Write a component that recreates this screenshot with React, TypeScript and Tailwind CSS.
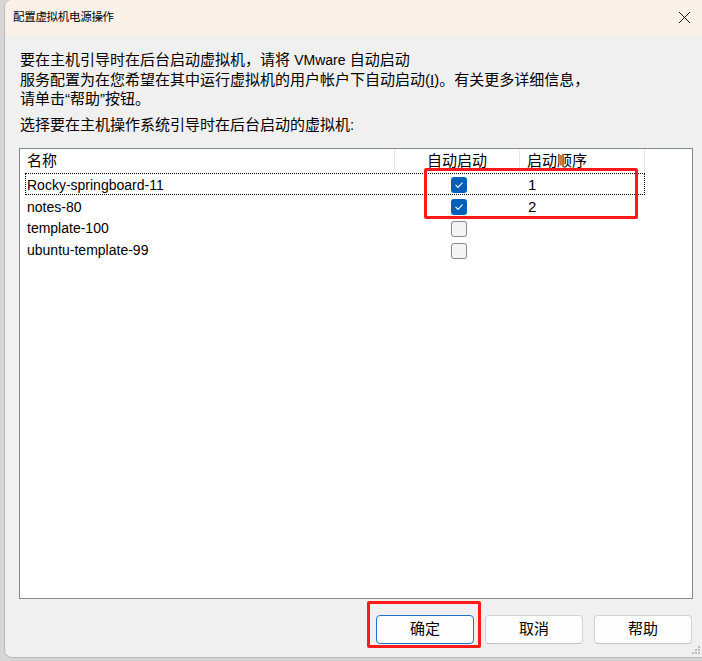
import React from "react"

const FONT = '"Liberation Sans", "Noto Sans CJK SC", sans-serif'

const vms = [
  { name: "Rocky-springboard-11", checked: true, order: "1", focus: true },
  { name: "notes-80", checked: true, order: "2", focus: false },
  { name: "template-100", checked: false, order: "", focus: false },
  { name: "ubuntu-template-99", checked: false, order: "", focus: false },
]

const Checkbox = ({ checked }: { checked: boolean }) =>
  checked ? (
    <div className="w-[16px] h-[16px] rounded-[3px] bg-[#005fb8] flex items-center justify-center">
      <svg width="10" height="10" viewBox="0 0 10 10" fill="none">
        <path d="M1.8 5.2 L4 7.3 L8.3 2.8" stroke="#ffffff" strokeWidth="1.1" strokeLinecap="round" strokeLinejoin="round" />
      </svg>
    </div>
  ) : (
    <div className="w-[16px] h-[16px] rounded-[3px] border border-[#8a8a8a] bg-[#f4f4f4]" />
  )

const Button = ({ label, primary }: { label: string; primary?: boolean }) => (
  <button
    className={
      primary
        ? "w-[98px] h-[29px] rounded-[4px] border border-[#1a73c9] bg-[#fdfdfd] text-[15px] text-black flex items-center justify-center"
        : "w-[98px] h-[29px] rounded-[4px] border border-[#d3d3d3] border-b-[#c2c2c2] bg-[#fdfdfd] text-[15px] text-black flex items-center justify-center"
    }
  >
    {label}
  </button>
)

export default function App() {
  return (
    <div className="w-[702px] h-[661px] overflow-hidden bg-[#d6d6d6] relative" style={{ fontFamily: FONT }}>
      <div className="ml-[4px] w-[698px] h-[658px] bg-[#f0f0f0] border-l border-b border-[#b9b9b9] rounded-tl-[8px] rounded-bl-[8px] overflow-hidden flex flex-col relative">
        {/* Title bar */}
        <div className="h-[35px] shrink-0 bg-[#faf2e9] flex items-center justify-between pl-[8px] pr-[10px]">
          <span className="text-[11.5px] text-black tracking-[-0.3px]">配置虚拟机电源操作</span>
          <svg width="13" height="13" viewBox="0 0 13 13" className="mr-[1px]">
            <path d="M1 1 L12 12 M12 1 L1 12" stroke="#111111" strokeWidth="1" />
          </svg>
        </div>

        {/* Body */}
        <div className="flex-1 flex flex-col pl-[14px] pr-[10px] pt-[15px]">
          <div className="pl-[1px] text-[15px] leading-[19px] text-black">
            <p>
              要在主机引导时在后台启动虚拟机，请将 <span className="text-[14px]">VMware</span> 自动启动
            </p>
            <p>
              服务配置为在您希望在其中运行虚拟机的用户帐户下自动启动(<span className="underline">I</span>)。有关更多详细信息，
            </p>
            <p>请单击“帮助”按钮。</p>
            <p className="mt-[7px]">选择要在主机操作系统引导时在后台启动的虚拟机:</p>
          </div>

          {/* List */}
          <div className="mt-[14px] w-[674px] h-[451px] bg-white border border-[#828790]">
            <div className="grid grid-cols-[375px_125px_125px] h-[24px] text-[15px] text-black">
              <div className="border-r border-[#e5e5e5] pl-[7px] flex items-center">名称</div>
              <div className="border-r border-[#e5e5e5] flex items-center justify-center">自动启动</div>
              <div className="border-r border-[#e5e5e5] pl-[7px] flex items-center">启动顺序</div>
            </div>
            <div className="ml-[5px] w-[620px]">
              {vms.map((vm) => (
                <div
                  key={vm.name}
                  className={
                    vm.focus
                      ? "grid grid-cols-[370px_125px_125px] h-[22px] border border-dotted border-black"
                      : "grid grid-cols-[370px_125px_125px] h-[22px] border border-transparent"
                  }
                >
                  <div className="pl-[1px] flex items-center text-[14px] text-black">{vm.name}</div>
                  <div className="flex items-center justify-center">
                    <Checkbox checked={vm.checked} />
                  </div>
                  <div className="pl-[7px] flex items-center text-[15px] text-black">{vm.order}</div>
                </div>
              ))}
            </div>
          </div>

          {/* Buttons */}
          <div className="mt-[16px] flex justify-end gap-[11px] pr-[0px]">
            <Button label="确定" primary />
            <Button label="取消" />
            <Button label="帮助" />
          </div>
        </div>

        {/* Resize gripper */}
        <svg width="9" height="9" viewBox="0 0 9 9" className="absolute right-[1px] bottom-[2px]">
          <rect x="6" y="0" width="2" height="2" fill="#bdbdbd" />
          <rect x="3" y="3" width="2" height="2" fill="#bdbdbd" />
          <rect x="6" y="3" width="2" height="2" fill="#bdbdbd" />
          <rect x="0" y="6" width="2" height="2" fill="#bdbdbd" />
          <rect x="3" y="6" width="2" height="2" fill="#bdbdbd" />
          <rect x="6" y="6" width="2" height="2" fill="#bdbdbd" />
        </svg>
      </div>

      {/* Red annotation boxes */}
      <div className="absolute left-[424px] top-[168px] w-[214px] h-[51px] border-[3px] border-[#ff1a1a] rounded-[2px]" />
      <div className="absolute left-[367px] top-[601px] w-[114px] h-[47px] border-[3px] border-[#ff1a1a] rounded-[2px]" />
    </div>
  )
}
